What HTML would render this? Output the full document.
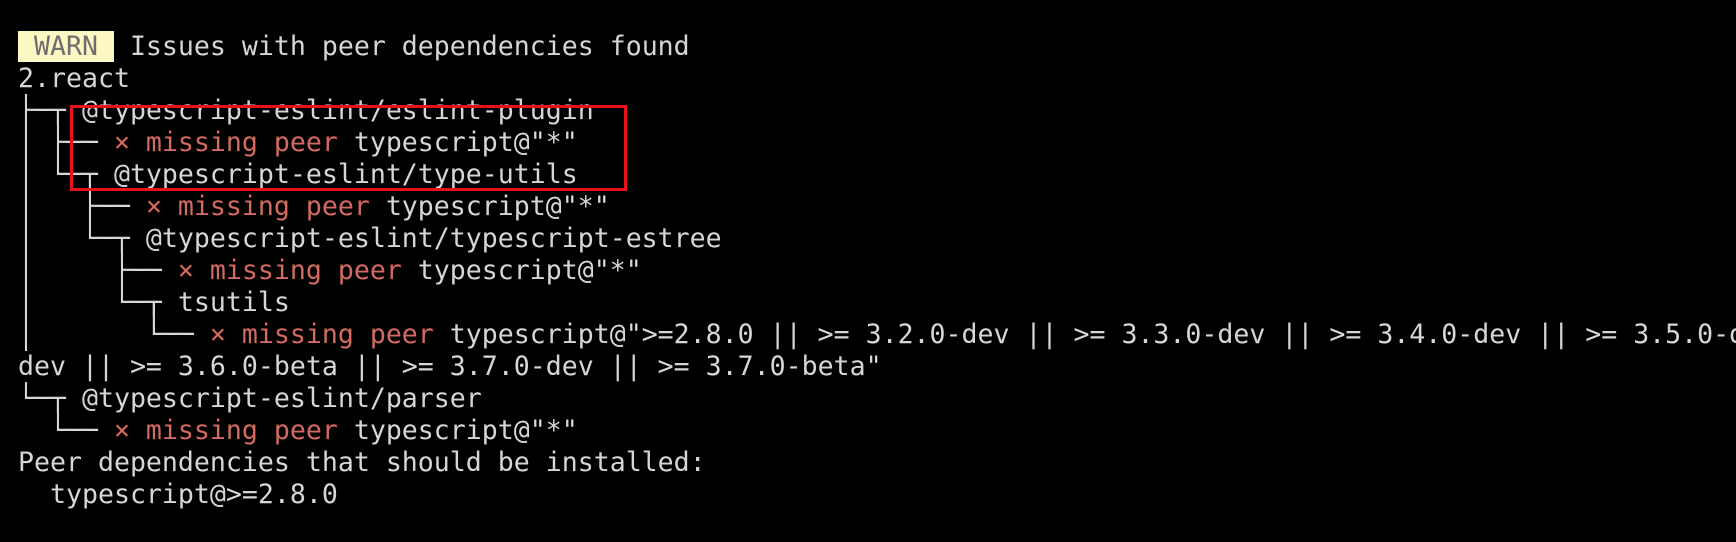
<!DOCTYPE html>
<html><head><meta charset="utf-8"><style>
html,body{margin:0;padding:0;background:#000;width:1736px;height:542px;overflow:hidden}
pre{position:absolute;left:18px;top:31px;margin:0;font-family:"DejaVu Sans Mono","Liberation Mono",monospace;font-size:26.57px;line-height:32px;color:#d6d6d6;white-space:pre}
.r{color:#d46a61}
.w{background:#fbf8c4;color:#6e6e6e}
.box{position:absolute;left:70px;top:105px;width:551px;height:80px;border:3px solid #e8131a}
.v{position:absolute;width:2px;background:#d6d6d6}
</style></head><body>
<pre><span class="w"> WARN </span> Issues with peer dependencies found
2.react
├─┬ @typescript-eslint/eslint-plugin
│ ├── <span class="r">× missing peer</span> typescript@"*"
│ └─┬ @typescript-eslint/type-utils
│   ├── <span class="r">× missing peer</span> typescript@"*"
│   └─┬ @typescript-eslint/typescript-estree
│     ├── <span class="r">× missing peer</span> typescript@"*"
│     └─┬ tsutils
│       └── <span class="r">× missing peer</span> typescript@"&gt;=2.8.0 || &gt;= 3.2.0-dev || &gt;= 3.3.0-dev || &gt;= 3.4.0-dev || &gt;= 3.5.0-d
dev || &gt;= 3.6.0-beta || &gt;= 3.7.0-dev || &gt;= 3.7.0-beta"
└─┬ @typescript-eslint/parser
  └── <span class="r">× missing peer</span> typescript@"*"
Peer dependencies that should be installed:
  typescript@&gt;=2.8.0</pre>
<div class="v" style="left:25px;top:95px;height:256px"></div>
<div class="v" style="left:57px;top:111px;height:64px"></div>
<div class="v" style="left:89px;top:175px;height:64px"></div>
<div class="v" style="left:121px;top:239px;height:64px"></div>
<div class="v" style="left:153px;top:303px;height:32px"></div>
<div class="v" style="left:57px;top:399px;height:32px"></div>
<div class="box"></div>
</body></html>
